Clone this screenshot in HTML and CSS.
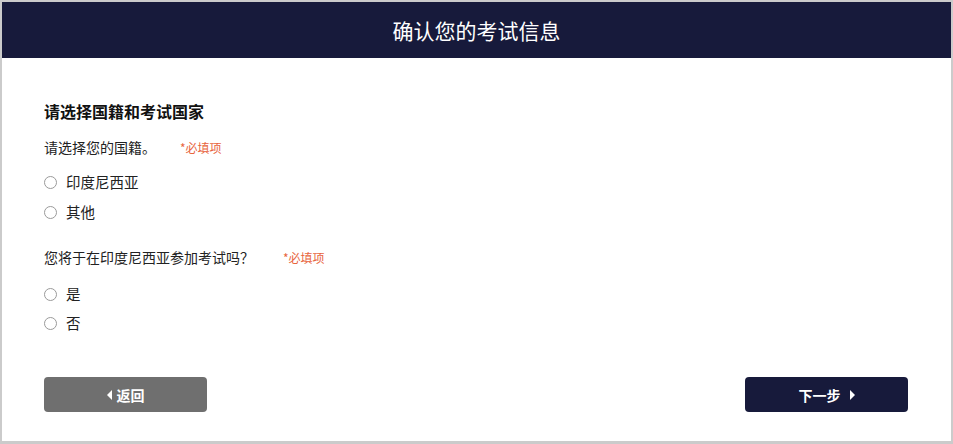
FILE: index.html
```html
<!DOCTYPE html>
<html lang="zh-CN">
<head>
    <meta charset="UTF-8">
    <meta name="viewport" content="width=device-width, initial-scale=1.0">
    <title>确认您的考试信息</title>
    <link rel="stylesheet" href="styles.css">
</head>
<body>
    <div class="page">
        <header class="page-header">
            <h1>确认您的考试信息</h1>
        </header>

        <form class="exam-form">
            <h2 class="section-title">请选择国籍和考试国家</h2>

            <div class="field">
                <p class="question">请选择您的国籍。<span class="required">*必填项</span></p>
                <div class="options">
                    <label class="option"><input type="radio" name="nationality" value="id"> 印度尼西亚</label>
                    <label class="option"><input type="radio" name="nationality" value="other"> 其他</label>
                </div>
            </div>

            <div class="field">
                <p class="question">您将于在印度尼西亚参加考试吗？<span class="required required-wide">*必填项</span></p>
                <div class="options">
                    <label class="option"><input type="radio" name="inCountry" value="yes"> 是</label>
                    <label class="option"><input type="radio" name="inCountry" value="no"> 否</label>
                </div>
            </div>

            <div class="actions">
                <button type="button" class="btn btn-back"><span class="arrow-left"></span>返回</button>
                <button type="submit" class="btn btn-next">下一步<span class="arrow-right"></span></button>
            </div>
        </form>
    </div>
</body>
</html>
```

FILE: styles.css
```css
* {
    margin: 0;
    padding: 0;
    box-sizing: border-box;
}

body {
    background-color: #cbcbcb;
    padding: 2px 2px 3px 2px;
    font-family: "Noto Sans CJK SC", "Liberation Sans", sans-serif;
    color: #222;
}

.page {
    background-color: #fff;
    height: 439px;
}

.page-header {
    background-color: #171a3b;
    height: 56px;
    display: flex;
    align-items: center;
    justify-content: center;
}

.page-header h1 {
    color: #fff;
    font-size: 21px;
    font-weight: normal;
    line-height: 24px;
}

.exam-form {
    padding: 43px 43px 0 42px;
}

.section-title {
    font-size: 16px;
    font-weight: bold;
    line-height: 20px;
    height: 20px;
    color: #111;
}

.field {
    margin-top: 16px;
}

.field + .field {
    margin-top: 25px;
}

.question {
    display: flex;
    align-items: baseline;
    height: 20px;
    font-size: 14px;
    line-height: 20px;
}

.required {
    color: #e8643c;
    font-size: 12px;
    margin-left: 24px;
}

.required-wide {
    margin-left: 29px;
}

.options {
    display: flex;
    flex-direction: column;
    gap: 10px;
    margin-top: 15px;
}

.field + .field .options {
    margin-top: 17px;
    gap: 9px;
}

.option {
    display: flex;
    align-items: center;
    gap: 9px;
    height: 20px;
    font-size: 14.5px;
    line-height: 20px;
}

.option input[type="radio"] {
    appearance: none;
    width: 13px;
    height: 13px;
    border: 1px solid #9a9a9a;
    border-radius: 50%;
    background-color: #fff;
}

.actions {
    display: flex;
    justify-content: space-between;
    margin-top: 44px;
}

.btn {
    width: 163px;
    height: 35px;
    border: none;
    border-radius: 4px;
    color: #fff;
    font-family: "Noto Sans CJK SC", "Liberation Sans", sans-serif;
    font-size: 14px;
    font-weight: bold;
    display: flex;
    align-items: center;
    justify-content: center;
    cursor: pointer;
}

.btn-back {
    background-color: #6f6f6f;
}

.btn-next {
    background-color: #171a3b;
}

.arrow-left {
    display: inline-block;
    border-top: 5px solid transparent;
    border-bottom: 5px solid transparent;
    border-right: 5px solid #fff;
    margin-right: 5px;
}

.arrow-right {
    display: inline-block;
    border-top: 5px solid transparent;
    border-bottom: 5px solid transparent;
    border-left: 5px solid #fff;
    margin-left: 9px;
}
```
